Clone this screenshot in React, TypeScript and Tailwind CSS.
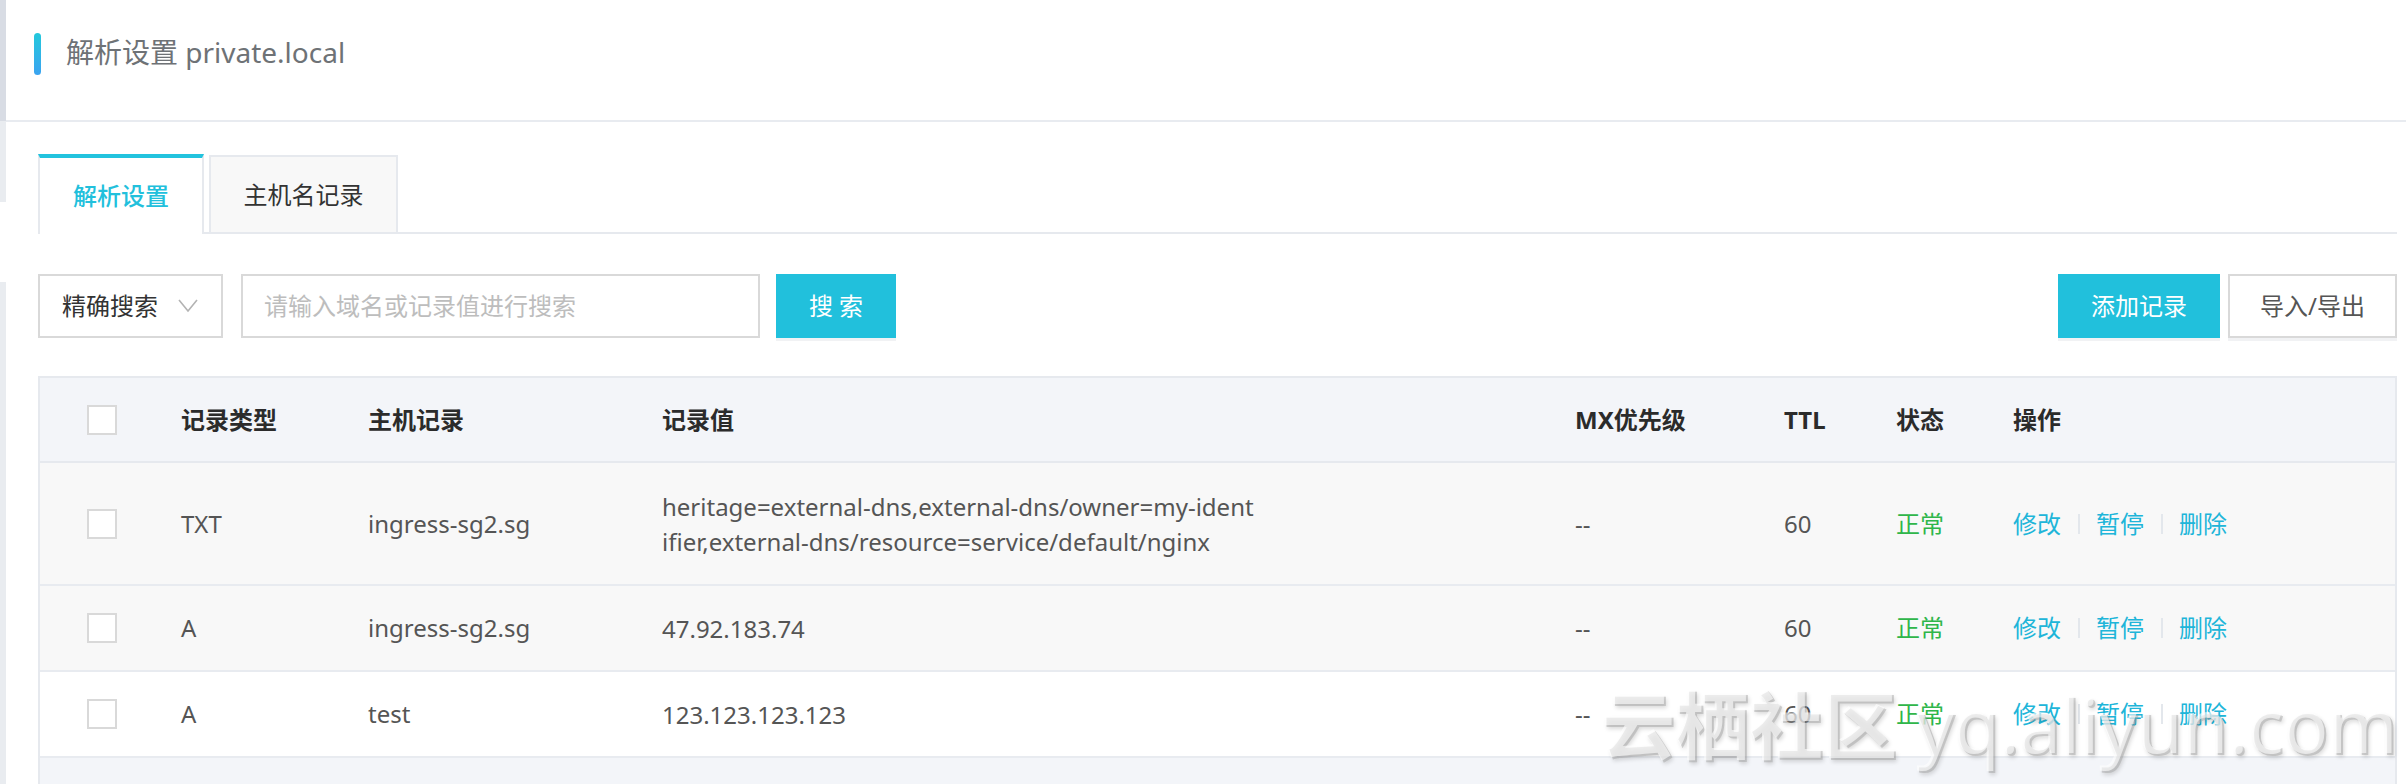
import React from "react";

const records = [
  {
    type: "TXT",
    host: "ingress-sg2.sg",
    value: [
      "heritage=external-dns,external-dns/owner=my-ident",
      "ifier,external-dns/resource=service/default/nginx",
    ],
    mx: "--",
    ttl: "60",
    status: "正常",
    rowClass: "h-[123px] bg-[#f8f8f8]",
  },
  {
    type: "A",
    host: "ingress-sg2.sg",
    value: ["47.92.183.74"],
    mx: "--",
    ttl: "60",
    status: "正常",
    rowClass: "h-[86px] bg-[#f8f8f8]",
  },
  {
    type: "A",
    host: "test",
    value: ["123.123.123.123"],
    mx: "--",
    ttl: "60",
    status: "正常",
    rowClass: "h-[86px] bg-white",
  },
];

function Checkbox() {
  return <span className="ml-[47px] block h-[30px] w-[30px] border-2 border-[#d9d9d9] bg-white" />;
}

function Actions() {
  return (
    <div className="flex items-center text-[#20b5d9]">
      <span>修改</span>
      <span className="ml-[17px] mr-[16px] h-[20px] w-[2px] bg-[#e3e7ec]" />
      <span>暂停</span>
      <span className="ml-[17px] mr-[16px] h-[20px] w-[2px] bg-[#e3e7ec]" />
      <span>删除</span>
    </div>
  );
}

export default function App() {
  return (
    <div className="relative flex h-[784px] w-full overflow-hidden bg-white font-['Noto_Sans','Noto_Sans_CJK_SC',sans-serif] text-[24px]">
      {/* left edge strip */}
      <div className="flex w-[6px] shrink-0 flex-col">
        <div className="h-[121px] bg-[#d8dce4]" />
        <div className="h-[81px] bg-[#e9ecf0]" />
        <div className="h-[80px] bg-white" />
        <div className="flex-1 bg-[#e9ecf0]" />
      </div>

      <div className="flex min-w-0 flex-1 flex-col">
        {/* page header */}
        <div className="flex h-[122px] shrink-0 items-start border-b-2 border-[#e8ebf0] pl-[28px] pt-[31px]">
          <span className="mt-[2px] h-[42px] w-[7px] rounded-full bg-gradient-to-b from-[#22c8dc] to-[#3aa3f0]" />
          <h1 className="ml-[25px] text-[28px] font-normal leading-[42px] text-[#6e7276]">
            解析设置 private.local
          </h1>
        </div>

        <div className="flex flex-1 flex-col pl-[32px] pr-[9px] pt-[32px]">
          {/* tabs */}
          <div className="flex items-end gap-[5px] border-b-2 border-[#e6e9ee]">
            <div className="-mb-[2px] flex h-[80px] w-[166px] items-center justify-center border-x-2 border-t-4 border-x-[#e6e9ee] border-t-[#22c3de] bg-white font-medium text-[#22c0dc]">
              解析设置
            </div>
            <div className="-mb-[2px] flex h-[79px] w-[189px] items-center justify-center border-2 border-[#e6e9ee] bg-[#f8f8f8] text-[#333]">
              主机名记录
            </div>
          </div>

          {/* search bar */}
          <div className="mt-[40px] flex h-[64px] items-stretch">
            <div className="flex w-[185px] items-center justify-between border-2 border-[#d9d9d9] pl-[22px] pr-[23px] text-[#333]">
              <span>精确搜索</span>
              <svg width="20" height="14" viewBox="0 0 20 14" fill="none">
                <path d="M1 1L10 12L19 1" stroke="#b3b3b3" strokeWidth="1.6" />
              </svg>
            </div>
            <input
              className="ml-[18px] w-[519px] border-2 border-[#d9d9d9] px-[21px] text-[24px] text-[#333] outline-none placeholder:text-[#bdbdbd]"
              placeholder="请输入域名或记录值进行搜索"
            />
            <button className="ml-[16px] w-[120px] bg-[#21c0dc] text-white shadow-[0_3px_0_#f1f2f4]">
              搜 索
            </button>
            <div className="flex-1" />
            <button className="w-[162px] bg-[#21c0dc] text-white shadow-[0_3px_0_#f1f2f4]">添加记录</button>
            <button className="ml-[8px] w-[169px] border-2 border-[#d9d9d9] bg-white text-[#555] shadow-[0_3px_0_#f1f2f4]">
              导入/导出
            </button>
          </div>

          {/* records table */}
          <div className="mt-[38px] flex flex-1 flex-col border-x-2 border-t-2 border-[#e6e9ee]">
            <div className="grid h-[85px] shrink-0 grid-cols-[141px_187px_294px_913px_209px_112px_117px_1fr] items-center border-b-2 border-[#e6e9ee] bg-[#f3f5f9] font-bold text-[#2b2b2b]">
              <Checkbox />
              <span>记录类型</span>
              <span>主机记录</span>
              <span>记录值</span>
              <span>MX优先级</span>
              <span>TTL</span>
              <span>状态</span>
              <span>操作</span>
            </div>
            {records.map((r, i) => (
              <div
                key={i}
                className={`grid shrink-0 grid-cols-[141px_187px_294px_913px_209px_112px_117px_1fr] items-center border-b-2 border-[#e8ebf0] text-[#555] ${r.rowClass}`}
              >
                <Checkbox />
                <span>{r.type}</span>
                <span>{r.host}</span>
                <div className="leading-[35px]">
                  {r.value.map((line) => (
                    <div key={line}>{line}</div>
                  ))}
                </div>
                <span>{r.mx}</span>
                <span>{r.ttl}</span>
                <span className="text-[#2fb64a]">{r.status}</span>
                <Actions />
              </div>
            ))}
            <div className="flex-1 bg-[#f3f5f9]" />
          </div>
        </div>
      </div>

      {/* watermark */}
      <div className="pointer-events-none absolute left-[1601px] top-[688px] whitespace-nowrap text-[74px] leading-none text-white/60 [text-shadow:2px_2px_0_rgba(160,160,160,0.45),3px_4px_4px_rgba(0,0,0,0.15)]">
        <span className="font-bold">云栖社区</span> yq.aliyun.com
      </div>
    </div>
  );
}
